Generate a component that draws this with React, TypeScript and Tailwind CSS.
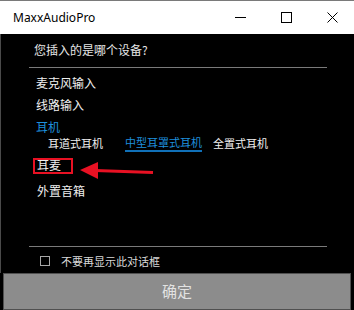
import React from 'react';

const cjk = { fontFamily: '"Noto Sans CJK SC", "Noto Sans", sans-serif' };

function TitleBar() {
  return (
    <div className="flex h-[34px] items-center border-t border-[#7a7a7a] bg-white pl-[13px] overflow-hidden">
      <span className="text-[12px] text-black" style={{ fontFamily: '"Noto Sans", sans-serif' }}>
        MaxxAudioPro
      </span>
      <div className="ml-auto mr-[-1px] flex h-full">
        <div className="flex w-[46px] items-center justify-center">
          <svg width="11" height="11" viewBox="0 0 11 11">
            <line x1="0" y1="5.5" x2="11" y2="5.5" stroke="#000" strokeWidth="1" />
          </svg>
        </div>
        <div className="flex w-[46px] items-center justify-center">
          <svg width="11" height="11" viewBox="0 0 11 11">
            <rect x="0.5" y="0.5" width="10" height="10" fill="none" stroke="#000" strokeWidth="1" />
          </svg>
        </div>
        <div className="flex w-[46px] items-center justify-center">
          <svg width="11" height="11" viewBox="0 0 11 11">
            <path d="M0.5 0.5 L10.5 10.5 M10.5 0.5 L0.5 10.5" stroke="#000" strokeWidth="1" />
          </svg>
        </div>
      </div>
    </div>
  );
}

export default function App() {
  return (
    <div className="flex h-[310px] w-[354px] flex-col bg-black" style={cjk}>
      <TitleBar />

      <div className="relative flex flex-1 flex-col border-l border-[#4a4a4a]">
        <div className="mt-[8px] pl-[33px] text-[12px] leading-[16px] text-[#e6e6e6]">您插入的是哪个设备?</div>
        <div className="ml-[28px] mt-[9px] h-px w-[298px] bg-[#7a7a7a]" />

        <div className="mt-[7px] pl-[35px] text-[12px] leading-[16px] text-[#f0f0f0]">麦克风输入</div>
        <div className="mt-[6px] pl-[35px] text-[12px] leading-[16px] text-[#f0f0f0]">线路输入</div>
        <div className="mt-[6px] pl-[35px] text-[12px] leading-[16px] text-[#1e8fdc]">耳机</div>
        <div className="flex h-[16px] items-start pl-[47px] text-[11px] leading-[16px]">
          <span className="text-[#f0f0f0]">耳道式耳机</span>
          <span className="ml-[22px] border-b-2 border-[#1070b8] text-[#1e8fdc] leading-[15px]">中型耳罩式耳机</span>
          <span className="ml-[11px] text-[#f0f0f0]">全置式耳机</span>
        </div>
        <div className="mt-[6px] pl-[36px] text-[12px] leading-[16px] text-[#f0f0f0]">耳麦</div>
        <div className="mt-[10px] pl-[36px] text-[12px] leading-[16px] text-[#f0f0f0]">外置音箱</div>

        <div className="absolute left-[32px] top-[124px] h-[16px] w-[40px] border-2 border-[#e81123]" />
        <svg className="absolute left-[79px] top-[127px]" width="75" height="20" viewBox="0 0 75 20">
          <line x1="15" y1="9.5" x2="73" y2="11.5" stroke="#e81123" strokeWidth="3" />
          <polygon points="0,9 18,1 18,18" fill="#e81123" />
        </svg>

        <div className="mt-auto pb-[4px]">
          <div className="ml-[28px] h-px w-[298px] bg-[#7a7a7a]" />
          <div className="mt-[6px] flex h-[16px] items-center pl-[39px]">
            <div className="h-[10px] w-[10px] border border-[#a8a8a8]" />
            <span className="ml-[11px] text-[11px] leading-[16px] text-[#d8d8d8]">不要再显示此对话框</span>
          </div>
        </div>
      </div>

      <div className="mx-[3px] flex h-[37px] items-center justify-center border border-[#505050] bg-[#8c8c8c] text-[15px] text-[#e2e2e2]">
        确定
      </div>
    </div>
  );
}
